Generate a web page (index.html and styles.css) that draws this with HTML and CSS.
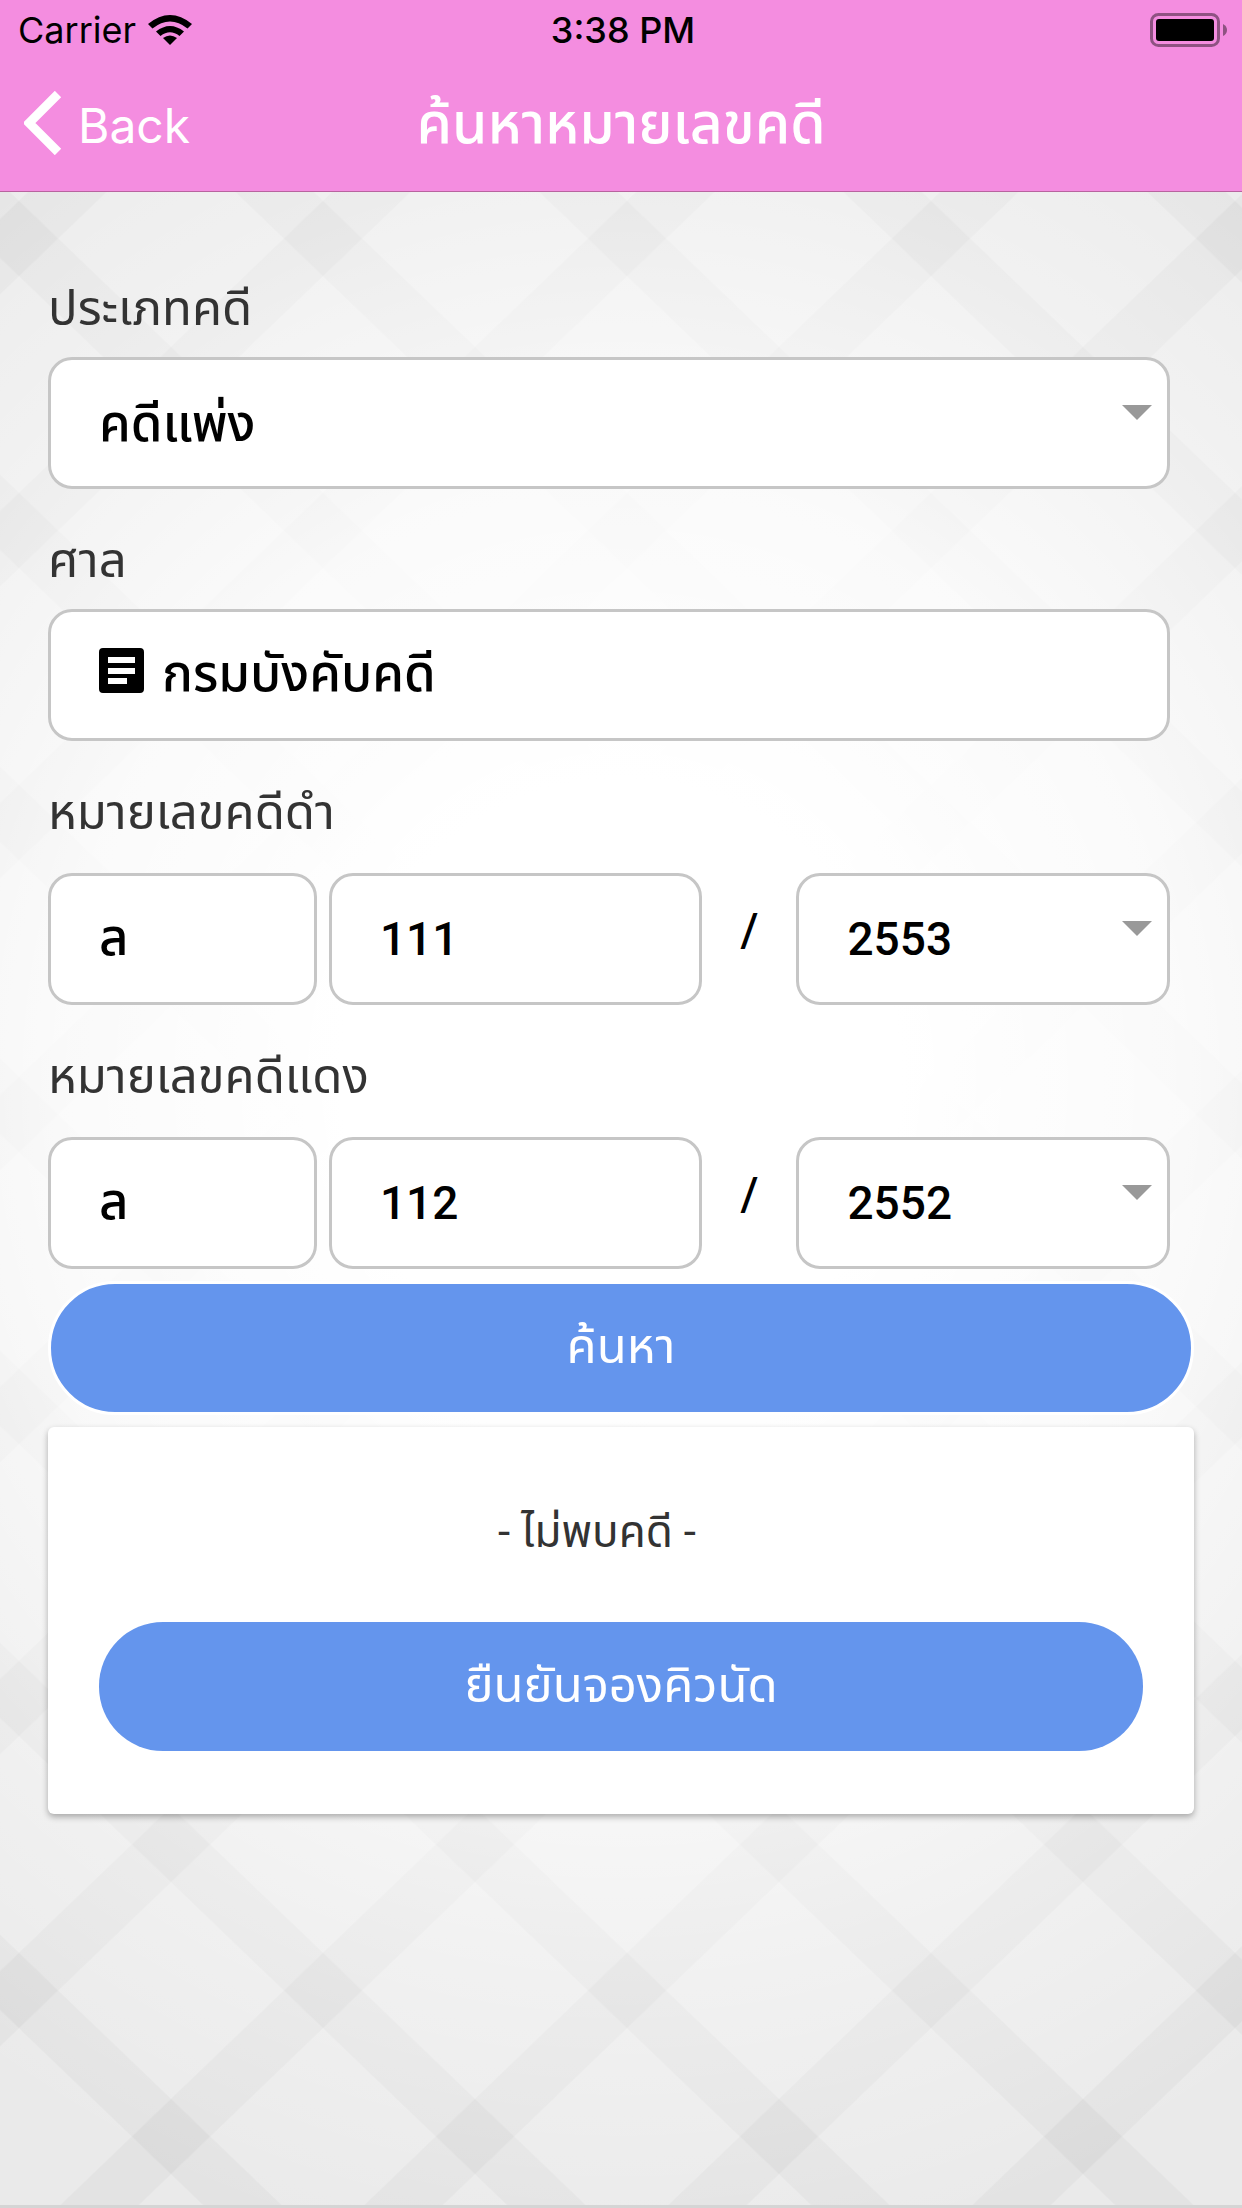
FILE: index.html
```html
<!DOCTYPE html>
<html lang="th">
<head>
    <meta charset="UTF-8">
    <meta name="viewport" content="width=device-width, initial-scale=1.0">
    <title>ค้นหาหมายเลขคดี</title>
    <link rel="stylesheet" href="styles.css">
</head>
<body>
    <!-- Background -->
    <svg class="page-bg" viewBox="0 0 1242 2208" preserveAspectRatio="xMidYMid slice" aria-hidden="true">
        <defs>
            <pattern id="lattice" x="627" y="240" width="304" height="292" patternUnits="userSpaceOnUse">
                <path class="stripe" d="M-304 -292L608 584M-304 0L304 584M0 -292L608 292"/>
                <path class="stripe" d="M608 -292L-304 584M304 -292L-304 292M608 0L0 584"/>
            </pattern>
            <radialGradient id="glow" gradientUnits="userSpaceOnUse" cx="0" cy="0" r="1" gradientTransform="translate(621 1080) scale(1120 1200)">
                <stop offset="0.25" stop-color="#fff"/>
                <stop offset="0.5" stop-color="#fff" stop-opacity="0.8"/>
                <stop offset="0.75" stop-color="#fff" stop-opacity="0.35"/>
                <stop offset="1" stop-color="#fff" stop-opacity="0"/>
            </radialGradient>
        </defs>
        <rect width="1242" height="2208" fill="#eaeaea"/>
        <rect width="1242" height="2208" fill="url(#lattice)"/>
        <rect width="1242" height="2208" fill="url(#glow)"/>
    </svg>

    <!-- Header -->
    <header class="header">
        <div class="status-bar">
            <div class="carrier">
                <span>Carrier</span>
                <svg class="wifi" viewBox="0 0 44 30" aria-hidden="true">
                    <path d="M22 30l-7-7q7-5 14 0z"/>
                    <path d="M8 16.500q14-11 28 0l-4.500 4.500q-9.500-7.500-19 0z"/>
                    <path d="M0 9q22-18 44 0l-4.500 4.500q-17.500-14-35 0z"/>
                </svg>
            </div>
            <div class="time">3:38 PM</div>
            <svg class="battery" viewBox="0 0 78 34" aria-hidden="true">
                <rect x="1.500" y="1.500" width="67" height="31" rx="7" fill="none" stroke="#000" stroke-opacity="0.42" stroke-width="3"/>
                <rect x="6" y="6" width="58" height="22" rx="3"/>
                <path d="M73 11q4 2 4 6t-4 6z" fill-opacity="0.42"/>
            </svg>
        </div>
        <div class="navbar">
            <a href="#" class="back">
                <svg viewBox="0 0 38 64" aria-hidden="true"><path d="M34 3L5 32l29 29"/></svg>
                <span>Back</span>
            </a>
            <h1>ค้นหาหมายเลขคดี</h1>
        </div>
    </header>

    <main class="content">
        <form class="search-form">
            <div class="field">
                <label for="case-type">ประเภทคดี</label>
                <div class="select">
                    <select id="case-type" class="control">
                        <option>คดีแพ่ง</option>
                    </select>
                </div>
            </div>

            <div class="field">
                <label for="court">ศาล</label>
                <button type="button" id="court" class="control court">
                    <svg viewBox="0 0 45 45" aria-hidden="true">
                        <path fill-rule="evenodd" d="M4 0h37q4 0 4 4v37q0 4-4 4H4q-4 0-4-4V4q0-4 4-4zM9 9v6h27V9zM9 20v6h27v-6zM9 30v6h19v-6z"/>
                    </svg>
                    <span>กรมบังคับคดี</span>
                </button>
            </div>

            <div class="field">
                <label for="black-prefix">หมายเลขคดีดำ</label>
                <div class="case-number">
                    <input id="black-prefix" class="control" type="text" value="ล">
                    <input class="control number" type="text" value="111" aria-label="เลขคดีดำ">
                    <span class="slash">/</span>
                    <div class="select">
                        <select class="control number" aria-label="ปีคดีดำ">
                            <option>2553</option>
                        </select>
                    </div>
                </div>
            </div>

            <div class="field">
                <label for="red-prefix">หมายเลขคดีแดง</label>
                <div class="case-number">
                    <input id="red-prefix" class="control" type="text" value="ล">
                    <input class="control number" type="text" value="112" aria-label="เลขคดีแดง">
                    <span class="slash">/</span>
                    <div class="select">
                        <select class="control number" aria-label="ปีคดีแดง">
                            <option>2552</option>
                        </select>
                    </div>
                </div>
            </div>
        </form>

        <button type="button" class="btn btn-search">ค้นหา</button>

        <div class="card">
            <p>- ไม่พบคดี -</p>
            <button type="button" class="btn">ยืนยันจองคิวนัด</button>
        </div>
    </main>
</body>
</html>
```
FILE: styles.css
```css
* {
    margin: 0;
    padding: 0;
    box-sizing: border-box;
}

body {
    position: relative;
    min-height: 100vh;
    overflow-x: hidden;
    border-bottom: 3px solid #d5d5d5;
    font-family: Roboto, "Noto Sans Thai", "Noto Sans", sans-serif;
    color: #333;
}

button,
input,
select {
    font-family: inherit;
}

.page-bg {
    position: absolute;
    top: 0;
    left: 0;
    z-index: -1;
    width: 100%;
    height: 100%;
}

.stripe {
    fill: none;
    stroke: #000;
    stroke-opacity: 0.03;
    stroke-width: 54;
}

.header {
    height: 192px;
    background-color: #f48de0;
    border-bottom: 1px solid #b8649f;
}

.status-bar {
    display: grid;
    grid-template-columns: 1fr auto 1fr;
    align-items: center;
    height: 60px;
    padding: 0 14px 0 18px;
    font-family: Inter, sans-serif;
    font-size: 36px;
    color: #000;
}

.carrier {
    display: flex;
    align-items: center;
    gap: 12px;
}

.wifi {
    width: 44px;
    height: 30px;
}

.time {
    font-weight: 500;
}

.battery {
    width: 78px;
    height: 34px;
    justify-self: end;
}

.navbar {
    display: grid;
    grid-template-columns: 1fr auto 1fr;
    align-items: center;
    height: 131px;
    padding: 0 24px;
    color: #fff;
}

.back {
    display: flex;
    align-items: center;
    gap: 16px;
    color: #fff;
    font-family: Inter, sans-serif;
    font-size: 48px;
    text-decoration: none;
}

.back svg {
    width: 38px;
    height: 64px;
    margin-bottom: 6px;
    fill: none;
    stroke: #fff;
    stroke-width: 9;
}

.navbar h1 {
    font-size: 57px;
    font-weight: 500;
}

.content {
    padding: 84px 48px;
}

.search-form {
    margin-right: 24px;
}

.field label {
    display: block;
    height: 81px;
    line-height: 66px;
    font-size: 49px;
}

.field + .field {
    margin-top: 39px;
}

.control {
    display: block;
    width: 100%;
    height: 132px;
    padding: 0 48px;
    border: 3px solid #c6c6c6;
    border-radius: 24px;
    background-color: #fff;
    color: #000;
    font-size: 51px;
    font-weight: 500;
    text-align: left;
    appearance: none;
}

.number {
    font-size: 46px;
}

.select {
    position: relative;
}

.select::after {
    content: "";
    position: absolute;
    top: 48px;
    right: 18px;
    border: 15px solid transparent;
    border-top-color: #999;
    border-bottom: 0;
    pointer-events: none;
}

.court {
    display: flex;
    align-items: center;
    gap: 18px;
}

.court svg {
    width: 45px;
    height: 45px;
    margin-bottom: 9px;
}

.case-number {
    display: grid;
    grid-template-columns: 18fr 25fr 70px 25fr;
    gap: 12px;
    align-items: center;
    padding-top: 12px;
}

.slash {
    padding-bottom: 18px;
    color: #000;
    font-size: 46px;
    font-weight: 500;
    text-align: center;
}

.btn {
    display: block;
    width: 100%;
    height: 129px;
    border: 0;
    border-radius: 64px;
    background-color: #6495ed;
    color: #fff;
    font-size: 49px;
}

.btn-search {
    height: 134px;
    margin: 12px 0;
    border: 3px solid #fff;
    border-radius: 67px;
}

.card {
    padding: 72px 51px 63px;
    border-radius: 6px;
    background-color: #fff;
    box-shadow: 0 3px 6px rgba(0, 0, 0, 0.3);
}

.card p {
    margin: 0 48px 57px 0;
    line-height: 66px;
    font-size: 44px;
    text-align: center;
}
```
